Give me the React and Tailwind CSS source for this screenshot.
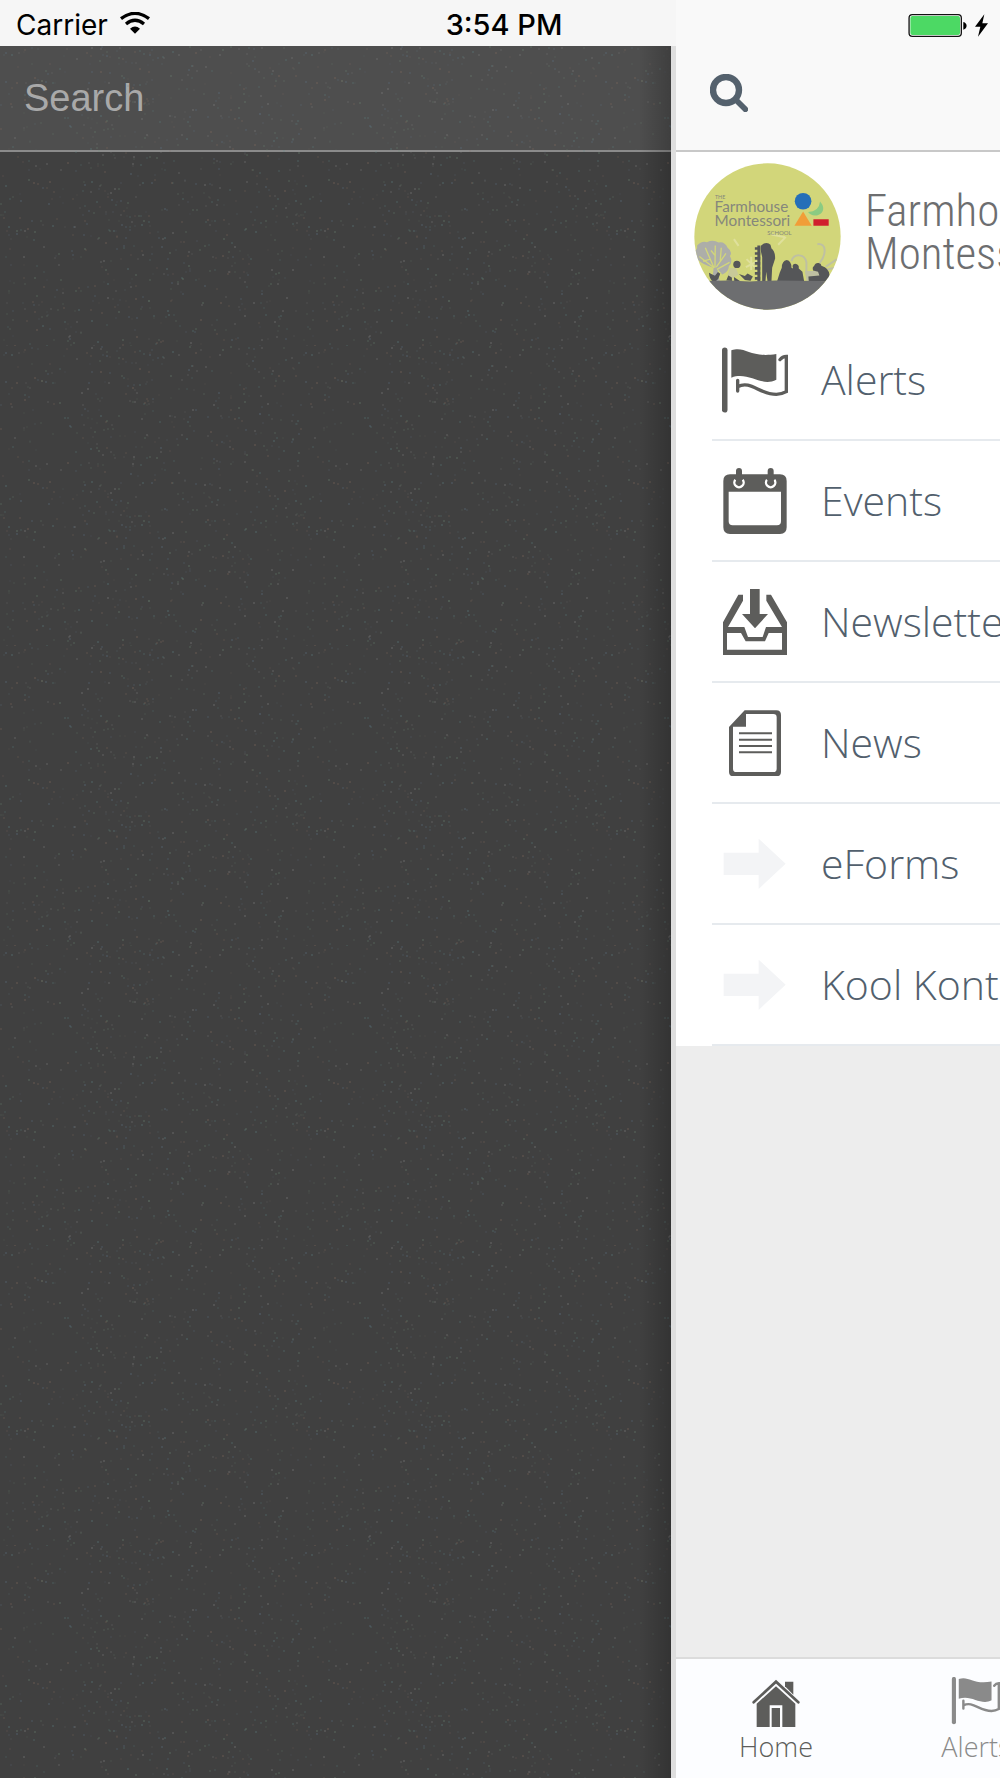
const speckColors = ['#5f8a8c', '#8c6f60', '#60788f', '#6f8f78', '#8f8f8f'];

const noise = (n) => {
  const v = Math.sin(n * 12.9898) * 43758.5453;
  return v - Math.floor(v);
};

// Repeatable scatter of faint dots for the drawer background
const specks = Array.from({ length: 900 }, (_, i) => ({
  x: Math.floor(noise(i + 1) * 300),
  y: Math.floor(noise(i + 1001) * 300),
  color: speckColors[i % 5],
  opacity: 0.06 + (i % 7) * 0.03,
}));

function FlagIcon() {
  return (
    <>
      <path d="M74 66V244" stroke="currentColor" strokeWidth="17" strokeLinecap="round" />
      <path d="M94 66C138 52 148 90 229 77V154C184 178 146 128 94 148Z" fill="currentColor" />
      <path
        d="M113 156V188M113 175C152 155 178 198 229 198Q245 198 259 190V84Q247 84 240 94"
        fill="none"
        stroke="currentColor"
        strokeWidth="10"
        strokeLinecap="round"
      />
    </>
  );
}

function CalendarIcon() {
  return (
    <>
      <path
        fill="currentColor"
        fillRule="evenodd"
        d="M90 437H240Q260 437 260 457V596Q260 616 240 616H90Q70 616 70 596V457Q70 437 90 437ZM86 489V578Q86 590 98 590H231Q243 590 243 578V489Z"
      />
      <path
        d="M106 453A14 14 0 1 0 128 453M201 453A14 14 0 1 0 223 453"
        fill="none"
        stroke="#fff"
        strokeWidth="7"
      />
      <path d="M117 427V458M212 427V458" stroke="currentColor" strokeWidth="18" strokeLinecap="round" />
    </>
  );
}

function InboxIcon() {
  return (
    <g fill="currentColor">
      <path d="M150 60H179V135H204L165 178L126 135H150Z" />
      <path
        fillRule="evenodd"
        d="M115 77H129V95L84 174H133L144 204H188L198 174H246L199 95V77H213L261 160V259H69V160ZM81 192V242H246V192H206L195 217H137L123 192Z"
      />
    </g>
  );
}

function NewsIcon() {
  return (
    <>
      <path
        fill="currentColor"
        fillRule="evenodd"
        d="M134 423H229Q243 423 243 437V607Q243 621 229 621H101Q87 621 87 607V473ZM138 434V472H99V598Q99 608 109 608H220Q230 608 230 598V444Q230 434 220 434Z"
      />
      <path d="M117 492H216M117 511H216M117 530H216M117 549H216" stroke="currentColor" strokeWidth="6" />
    </>
  );
}

function ArrowIcon() {
  return <path d="M71 161H176V119L257 194L176 270V228H71Z" fill="#f3f4f6" />;
}

function HomeIcon() {
  return (
    <>
      <path
        fill="currentColor"
        fillRule="evenodd"
        d="M288 190L346 138L404 190V260H365V195H327V260H288ZM333 203H358V260H333Z"
      />
      <path d="M373 138V124H398V163Z" fill="currentColor" />
      <path d="M279 186L346 124L413 186" fill="none" stroke="currentColor" strokeWidth="8" strokeLinecap="round" />
    </>
  );
}

const menu = [
  { label: 'Alerts', icon: FlagIcon, viewBox: '66 56 198 198' },
  { label: 'Events', icon: CalendarIcon, viewBox: '66 418 198 198' },
  { label: 'Newsletters', icon: InboxIcon, viewBox: '66 60 198 198' },
  { label: 'News', icon: NewsIcon, viewBox: '66 422 198 198' },
  { label: 'eForms', icon: ArrowIcon, viewBox: '66 96 198 198' },
  { label: 'Kool Kontent', icon: ArrowIcon, viewBox: '66 96 198 198' },
];

function StatusBar() {
  return (
    <div className="pointer-events-none absolute inset-x-0 top-0 grid h-[46px] grid-cols-[1fr_auto_1fr] items-center pt-1 pr-3 pl-4 font-[Inter,sans-serif] text-[28px] leading-8 text-black">
      <div className="flex items-center gap-3">
        <span>Carrier</span>
        <svg viewBox="0 0 90 66" className="mb-1 h-[22px] w-[30px]">
          <path d="M3 20Q45-12 87 20" fill="none" stroke="currentColor" strokeWidth="10" />
          <path d="M18 36Q45 14 72 36" fill="none" stroke="currentColor" strokeWidth="10" />
          <path d="M30 50Q45 37 60 50L45 65Z" fill="currentColor" />
        </svg>
      </div>
      <span className="pl-1 text-[29px] font-medium">3:54 PM</span>
      <div className="flex items-center justify-end gap-2">
        <svg viewBox="0 0 177 70" className="h-[23px] w-[59px]">
          <rect x="2" y="2" width="159" height="66" rx="10" fill="#fff" stroke="#111" strokeWidth="4" />
          <rect x="6" y="6" width="151" height="58" rx="6" fill="#4cd964" />
          <path d="M167 24Q177 27 177 36T167 48Z" fill="#000" />
        </svg>
        <svg viewBox="0 0 39 68" className="h-[23px] w-[13px]">
          <path d="M28 0L0 38H16L9 68L39 27H22Z" />
        </svg>
      </div>
    </div>
  );
}

function SchoolLogo() {
  return (
    <svg viewBox="73 35 442 442" className="size-[147px] shrink-0">
      <clipPath id="badge">
        <circle cx="294" cy="256" r="220" />
      </clipPath>
      <g clipPath="url(#badge)">
        <path d="M73 35H515V477H73Z" fill="#d2d67a" />
        {/* Pale trees and flowers */}
        <g fill="#adaea9">
          <path d="M128 390L132 350Q98 340 84 325L73 300Q85 296 82 284Q95 268 112 273Q130 264 147 274Q165 270 174 290Q190 302 181 315Q191 333 178 345Q177 364 158 370L143 352L150 390Z" />
          <path
            d="M89 316L133 350L107 290M136 350L137 283M140 348L169 307M142 355L180 334M120 325L100 330M138 315L124 298M152 328L155 290"
            stroke="#d2d67a"
            strokeWidth="4"
            fill="none"
          />
        </g>
        <g stroke="#bfc0a2" fill="none" strokeWidth="6">
          <path d="M444 279C472 275 472 310 450 337M366 330C374 306 405 307 411 333V370M469 347L502 325M474 355L510 347" />
          <path d="M410 363H455V386H414Z" fill="#bfc0a2" />
        </g>
        <path
          d="M231 324L262 354M229 348L264 330M245 317V357M306 250L347 258M326 281L349 257M193 264L207 284"
          stroke="#dfe09c"
          strokeWidth="6"
        />
        <g fontFamily="Lato, sans-serif" fontWeight="400" fill="#85877c">
          <text x="136" y="142" fontSize="16">THE</text>
          <text x="135" y="181" fontSize="46">Farmhouse</text>
          <text x="135" y="224" fontSize="46">Montessori</text>
          <text x="293" y="250" fontSize="18">SCHOOL</text>
        </g>
        <circle cx="401" cy="150" r="25" fill="#256fb8" />
        <path d="M452 151C473 174 456 194 437 193Q423 192 416 182Q449 182 452 151Z" fill="#8bcb82" />
        <path d="M401 181L427 224H375Z" fill="#f19d38" />
        <path d="M432 204H478V224H432Z" fill="#d01f2e" />
        {/* Children and hens */}
        <g fill="#555658">
          <path d="M278 390V318L274 300V284L283 277Q296 273 303 281L306 292Q317 300 317 322L308 350L306 390H294L290 362L288 390Z" />
          <path d="M268 283V390" stroke="#555658" strokeWidth="9" />
          <path d="M264 288V390" stroke="#555658" strokeWidth="16" strokeDasharray="8 7" />
          <path d="M323 390L331 364L337 350Q337 330 352 327Q366 330 366 350L371 352Q366 340 377 338Q390 340 388 352L399 362L404 390Z" />
          <path d="M417 376L450 373L446 362L431 358Q428 348 434 345Q438 334 448 336Q456 338 456 344Q480 351 481 374L477 390H418Z" />
          <path d="M118 365L128 370L136 374L145 363L152 368L146 383L138 391H130Q119 384 118 365ZM208 369L226 375L234 367L250 376L243 389L226 387Z" />
          <circle cx="202" cy="340" r="11" />
          <path d="M170 388L177 371L187 375V390ZM193 378L211 390H194Z" />
        </g>
        <path d="M181 351H199L207 371L189 381L174 372Z" fill="#c8c998" />
        <path d="M73 390L180 388L240 391L320 388L515 391V477H73Z" fill="#6d6e70" />
      </g>
    </svg>
  );
}

function SearchDrawer() {
  return (
    <aside className="flex min-w-0 flex-1 flex-col bg-[#f6f6f6] pt-[46px]">
      <div className="relative flex flex-1 flex-col border-r-[5px] border-[#dedede] bg-[#404040]">
        <label className="block border-b-2 border-[#8b8b8b] bg-[#4e4e4e] px-6">
          <span className="sr-only">Search</span>
          <input
            type="text"
            placeholder="Search"
            className="block h-[104px] w-full bg-transparent font-['Liberation_Sans',sans-serif] text-[38px] placeholder:text-[#a9a9a9] focus:outline-none"
          />
        </label>
        <svg className="pointer-events-none absolute inset-0 size-full" aria-hidden="true">
          <pattern id="specks" width="300" height="300" patternUnits="userSpaceOnUse">
            {specks.map((s, i) => (
              <rect key={i} x={s.x} y={s.y} width="2" height="2" fill={s.color} opacity={s.opacity} />
            ))}
          </pattern>
          <rect width="100%" height="100%" fill="url(#specks)" />
        </svg>
        <div className="pointer-events-none absolute inset-y-0 right-0 w-8 bg-linear-to-r from-black/0 to-black/20" />
      </div>
    </aside>
  );
}

function HomePanel() {
  return (
    <main className="flex w-[324px] shrink-0 flex-col overflow-hidden bg-[#ededed] font-['Open_Sans',sans-serif] font-light">
      <header className="border-b-2 border-[#c8c8c8] bg-[#f9f9f9] pt-[46px]">
        <button type="button" aria-label="Search" className="flex h-[104px] items-start px-[34px] pt-7">
          <svg viewBox="0 0 114 114" className="size-[38px] text-[#54616d]" fill="none" stroke="currentColor">
            <circle cx="48" cy="48" r="39" strokeWidth="19" />
            <path d="M78 78L106 106" strokeWidth="17" strokeLinecap="round" />
          </svg>
        </button>
      </header>

      <section className="bg-white">
        <div className="flex h-[168px] items-center gap-6 pl-[18px]">
          <SchoolLogo />
          <h1 className="pb-2 font-['Roboto_Condensed','Liberation_Sans_Narrow',sans-serif] text-[45px] leading-[43px] font-light text-[#6d6e70]">
            Farmhouse
            <br />
            Montessori
          </h1>
        </div>

        <nav className="pl-9">
          {menu.map(({ label, icon: Icon, viewBox }) => (
            <a
              key={label}
              href="#"
              className="flex h-[121px] items-center gap-[33px] border-b-2 border-[#e6eaee] pt-px pl-[10px] text-[41px] whitespace-nowrap text-[#52606d]"
            >
              <svg viewBox={viewBox} className="size-[66px] shrink-0 text-[#5d5d5b]">
                <Icon />
              </svg>
              {label}
            </a>
          ))}
        </nav>
      </section>

      <nav className="mt-auto flex border-t-2 border-[#dcdcdc] bg-[#fcfdff] text-[27px] leading-8">
        <a href="#" className="flex h-[119px] w-[200px] shrink-0 flex-col items-center gap-1 pt-[18px] text-[#5d5d5b]">
          <svg viewBox="271 110 150 150" className="size-[50px]">
            <HomeIcon />
          </svg>
          Home
        </a>
        <a href="#" className="flex h-[119px] w-[200px] shrink-0 flex-col items-center gap-1 pt-[18px] text-[#8a8a8a]">
          <svg viewBox="62 58 206 206" className="size-[50px]">
            <FlagIcon />
          </svg>
          Alerts
        </a>
      </nav>
    </main>
  );
}

export default function App() {
  return (
    <div className="relative flex min-h-screen overflow-hidden">
      <SearchDrawer />
      <HomePanel />
      <StatusBar />
    </div>
  );
}
